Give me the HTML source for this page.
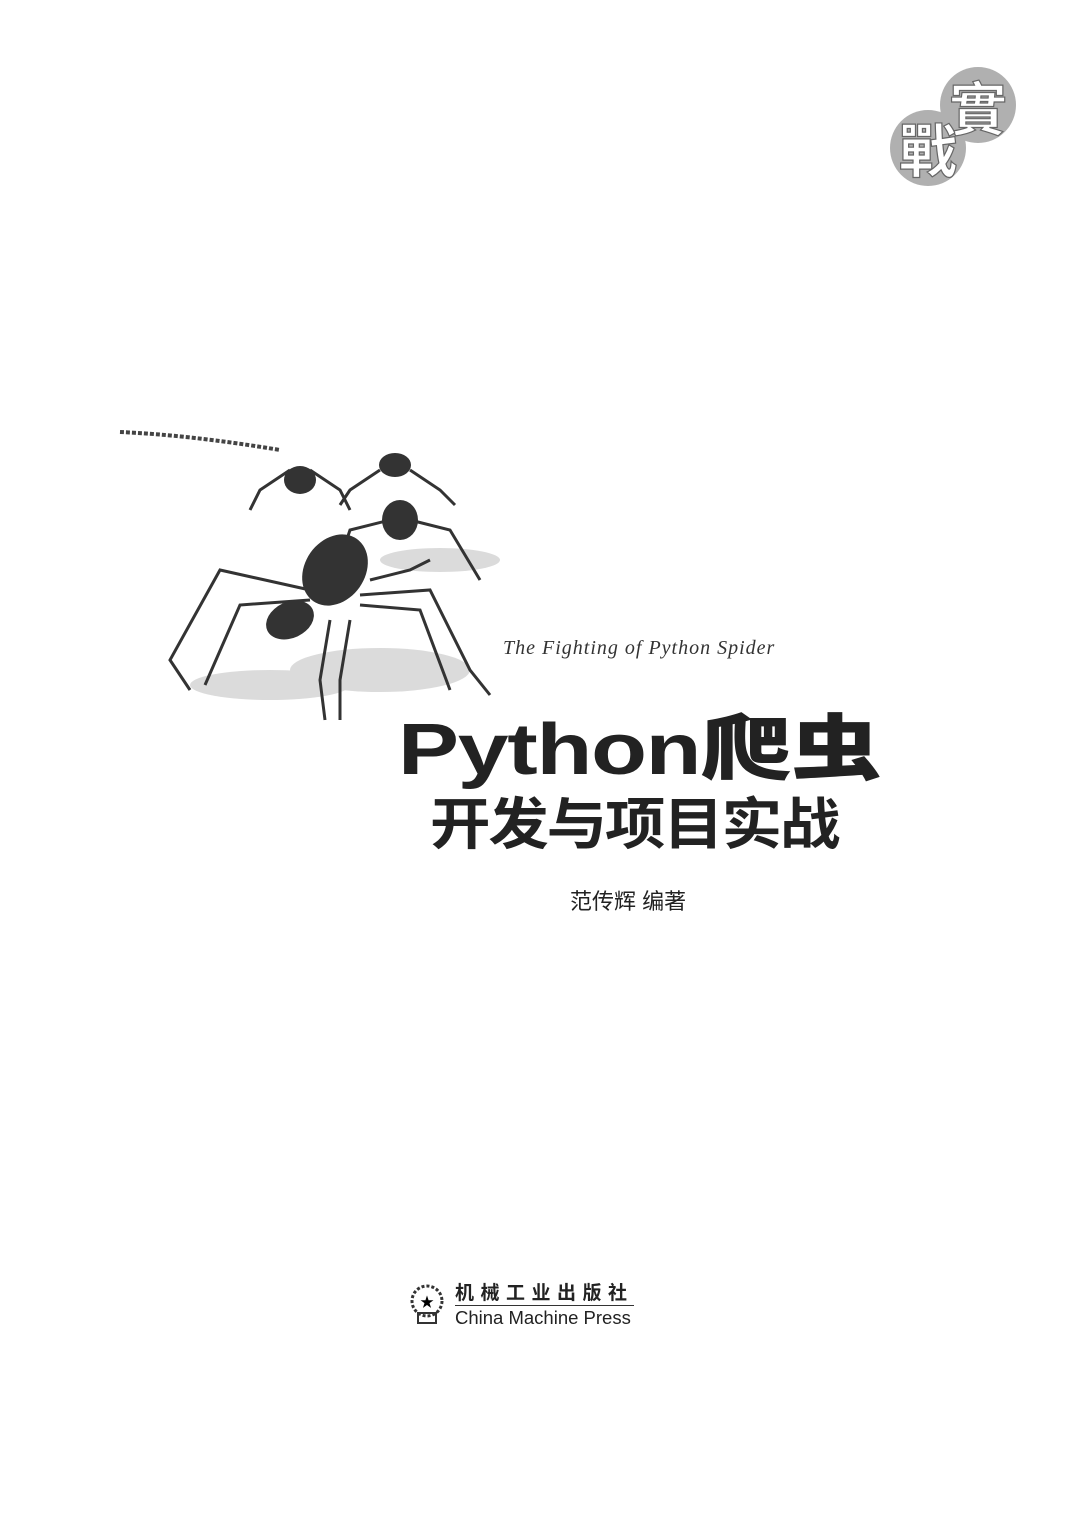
<!DOCTYPE html>
<html><head><meta charset="utf-8"><style>
body{margin:0;width:1075px;height:1520px;background:#fff;position:relative;overflow:hidden;font-family:"Liberation Sans","Noto Sans CJK SC",sans-serif;color:#222}
.a{position:absolute;white-space:nowrap}
</style></head><body>
<svg class="a" style="left:880px;top:60px" width="150" height="130">
<circle cx="98" cy="45" r="38" fill="#b0b0b0"/><circle cx="48" cy="88" r="38" fill="#b0b0b0"/>
<text x="98" y="70" font-size="58" font-weight="bold" fill="#fff" stroke="#666" stroke-width="1.2" text-anchor="middle" font-family="Noto Sans CJK TC">實</text>
<text x="48" y="112" font-size="58" font-weight="bold" fill="#fff" stroke="#666" stroke-width="1.2" text-anchor="middle" font-family="Noto Sans CJK TC">戰</text>
</svg>
<svg class="a" style="left:110px;top:420px" width="400" height="320">
<g fill="#ccc" opacity=".7"><ellipse cx="270" cy="250" rx="90" ry="22"/><ellipse cx="160" cy="265" rx="80" ry="15"/><ellipse cx="330" cy="140" rx="60" ry="12"/></g>
<g stroke="#444" stroke-width="4" fill="none" stroke-dasharray="4 2">
<path d="M10 12 Q80 15 170 30"/></g>
<g stroke="#333" stroke-width="3" fill="none">
<path d="M200 170 L110 150 L60 240 L80 270"/><path d="M200 180 L130 185 L95 265"/>
<path d="M240 200 L230 260 L230 300"/><path d="M220 200 L210 260 L215 300"/>
<path d="M250 185 L310 190 L340 270"/><path d="M250 175 L320 170 L360 250 L380 275"/>
<path d="M260 160 L300 150 L320 140"/>
<path d="M180 50 L150 70 L140 90"/><path d="M200 50 L230 70 L240 90"/>
<path d="M270 50 L240 70 L230 85"/><path d="M300 50 L330 70 L345 85"/>
<path d="M280 100 L240 110 L230 140"/><path d="M300 100 L340 110 L370 160"/>
</g>
<g fill="#333"><ellipse cx="190" cy="60" rx="16" ry="14"/><ellipse cx="285" cy="45" rx="16" ry="12"/>
<ellipse cx="290" cy="100" rx="18" ry="20"/><ellipse cx="225" cy="150" rx="30" ry="38" transform="rotate(35 225 150)"/>
<ellipse cx="180" cy="200" rx="25" ry="18" transform="rotate(-25 180 200)"/></g>
</svg>
<div class="a" style="left:503px;top:637px;font-family:'Liberation Serif',serif;font-style:italic;font-size:20px;letter-spacing:1px;color:#333">The Fighting of Python Spider</div>
<div class="a" style="left:398px;top:700px;font-size:72px;font-weight:bold;line-height:86px;color:#222;letter-spacing:-1px;transform:scaleX(1.27);transform-origin:0 0">Python<span style="font-family:'Noto Sans CJK SC';font-weight:900">爬虫</span></div>
<div class="a" style="left:430px;top:785px;font-size:56px;font-weight:bold;line-height:72px;font-family:'Noto Sans CJK SC',sans-serif;letter-spacing:-2px;transform:scaleX(1.08);transform-origin:0 0">开发与项目实战</div>
<div class="a" style="left:570px;top:886px;font-size:22px;line-height:32px">范传辉 编著</div>
<svg class="a" style="left:408px;top:1283px" width="40" height="45"><circle cx="19" cy="18" r="15" fill="none" stroke="#333" stroke-width="3" stroke-dasharray="3 2"/><text x="19" y="24" font-size="14" text-anchor="middle">★</text><rect x="10" y="30" width="18" height="10" fill="none" stroke="#333" stroke-width="2"/></svg>
<div class="a" style="left:455px;top:1283px;font-size:19px;font-weight:bold;letter-spacing:6.5px;line-height:22px;border-bottom:1px solid #333">机械工业出版社</div>
<div class="a" style="left:455px;top:1307px;font-size:18.5px;line-height:22px">China Machine Press</div>
</body></html>
